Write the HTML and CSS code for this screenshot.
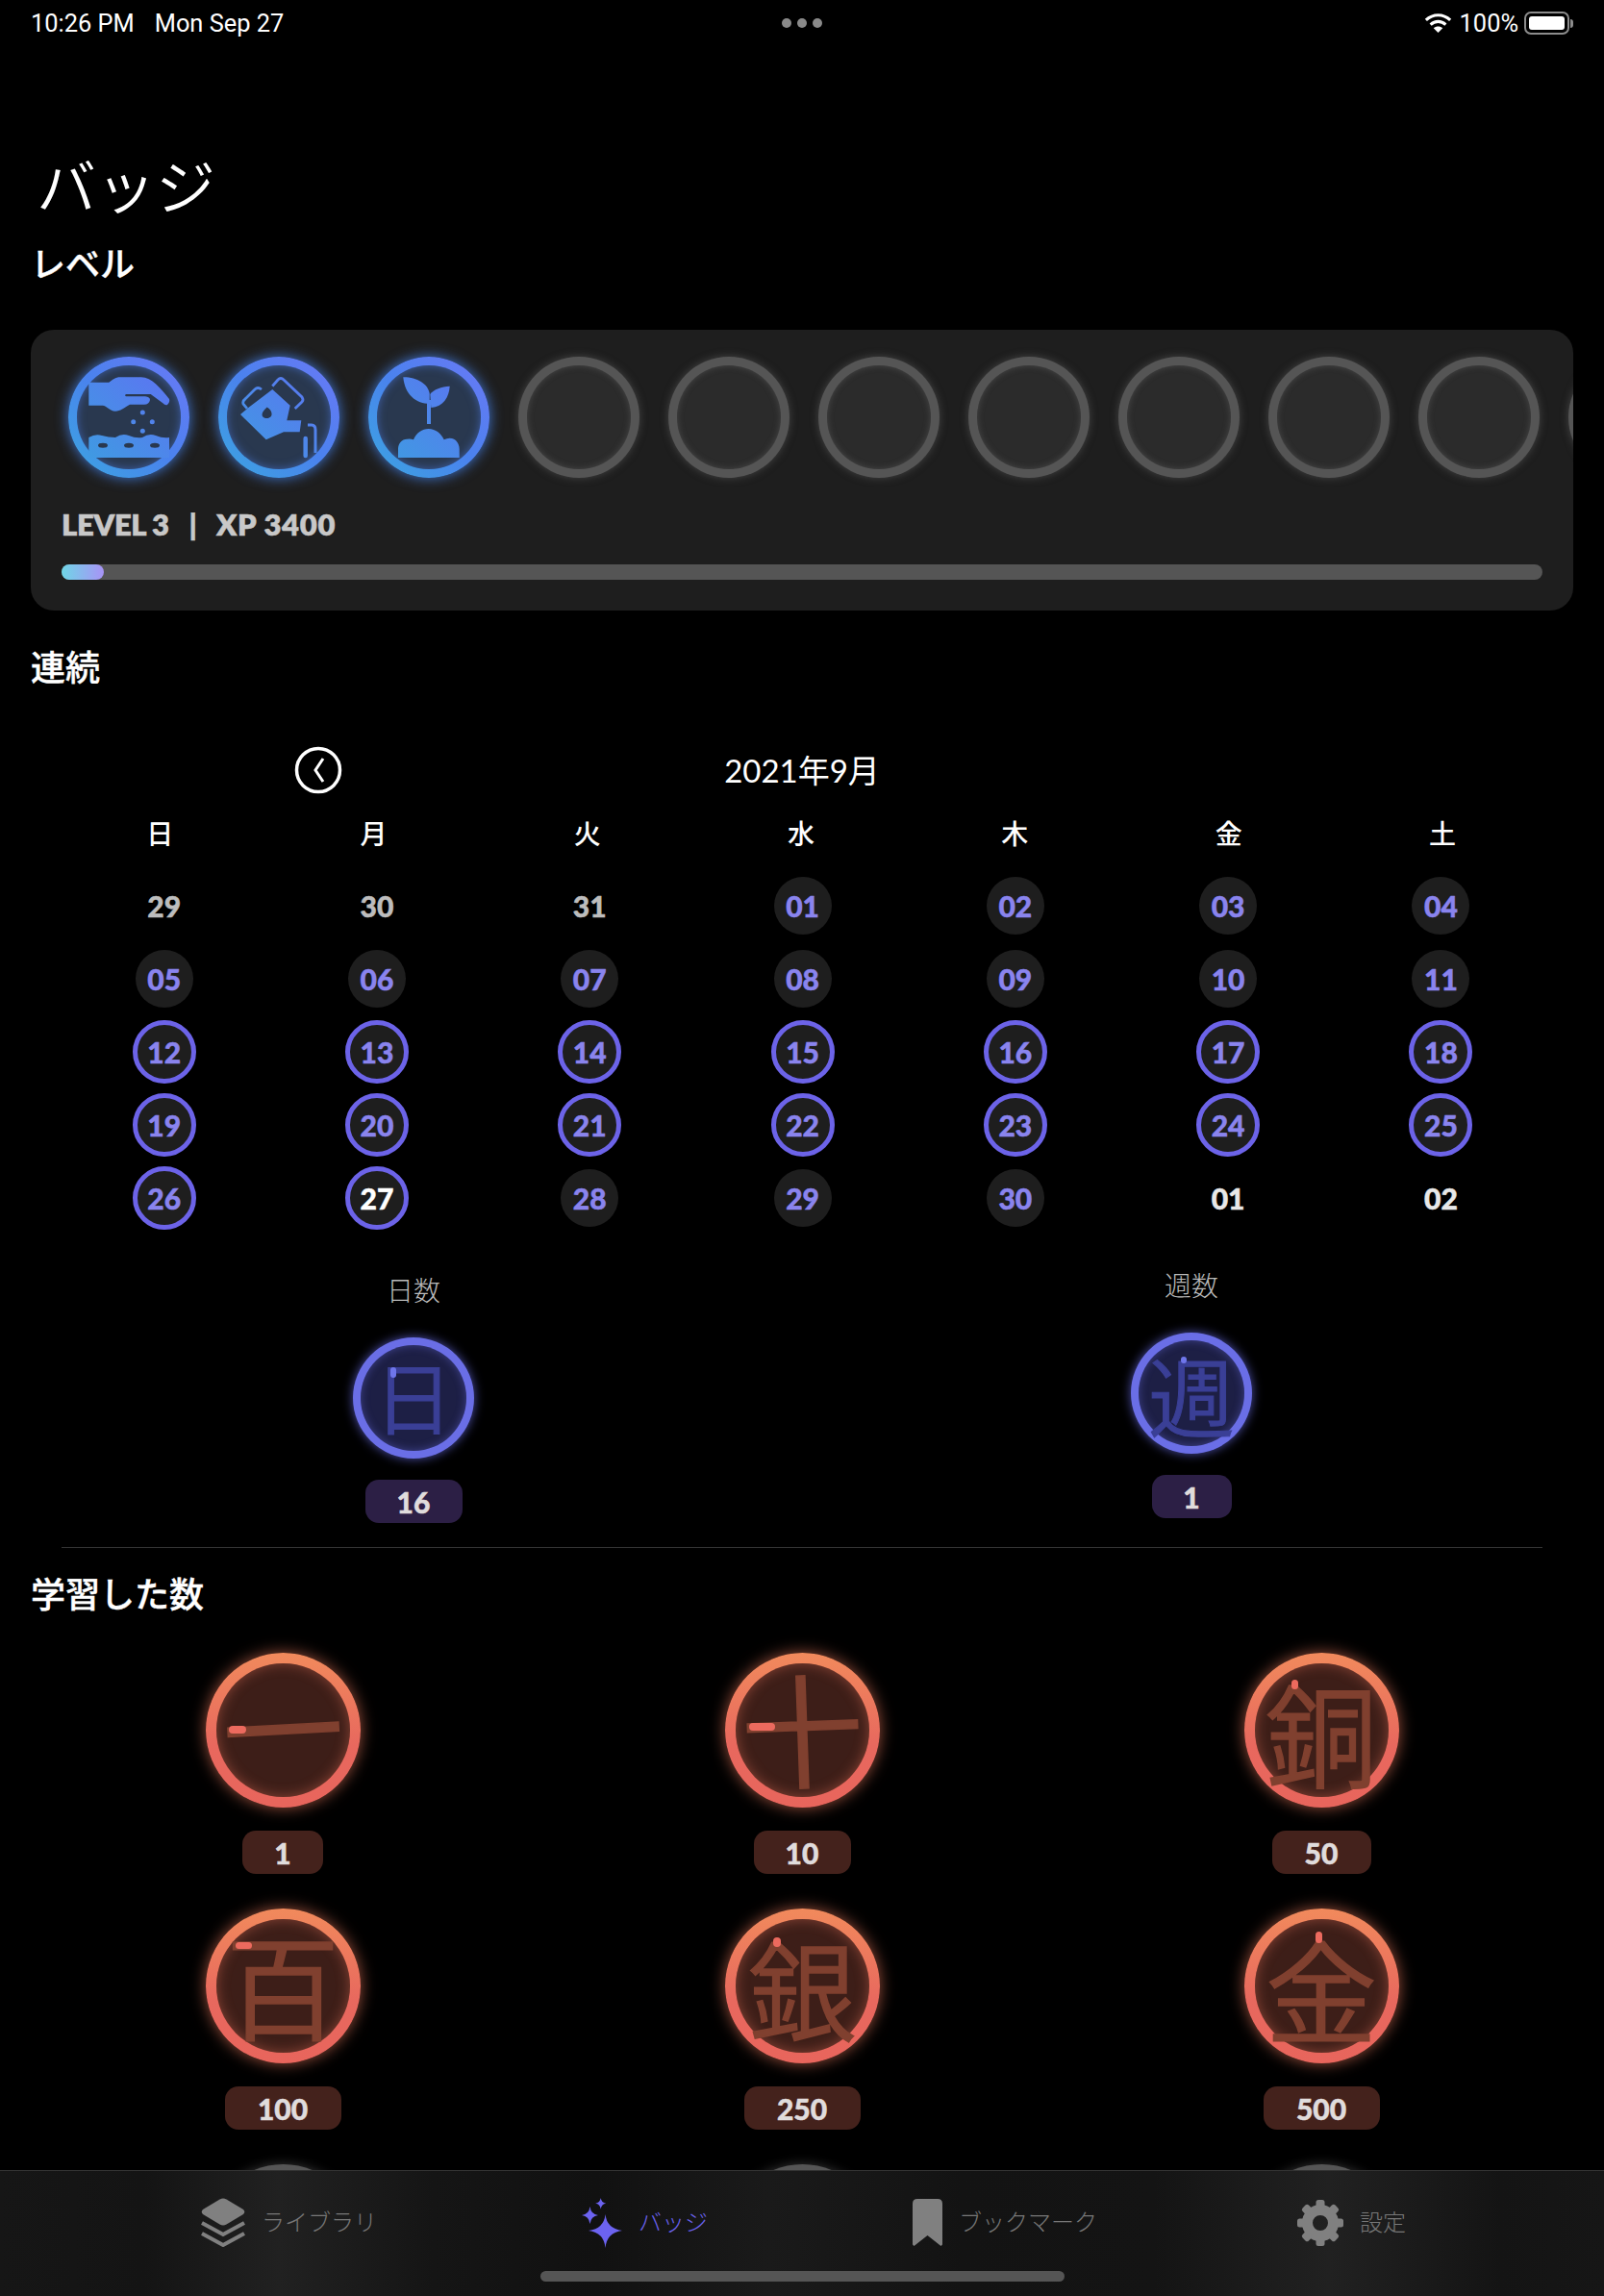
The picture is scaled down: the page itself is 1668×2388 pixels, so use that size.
FILE: index.html
```html
<!DOCTYPE html>
<html lang="ja">
<head>
    <meta charset="UTF-8">
    <meta name="viewport" content="width=device-width, initial-scale=1.0">
    <title>バッジ</title>
    <link rel="stylesheet" href="styles.css">
</head>
<body>
<div class="page">
    <div class="status-bar">
        <div class="status-left"><span>10:26 PM</span><span>Mon Sep 27</span></div>
        <div class="status-dots"><i></i><i></i><i></i></div>
        <div class="status-right">
            <svg class="wifi" viewBox="0 0 27 19" width="29" height="20">
                <path d="M1.500 6.500C8.500 0 18.500 0 25.500 6.500" fill="none" stroke="#fff" stroke-width="3"/>
                <path d="M6 11C10.500 7 16.500 7 21 11" fill="none" stroke="#fff" stroke-width="3"/>
                <path d="M13.500 19L9 14.500C11.500 12.300 15.500 12.300 18 14.500Z" fill="#fff"/>
            </svg>
            <span>100%</span>
            <div class="battery"><div class="battery-level"></div></div>
            <div class="battery-nub"></div>
        </div>
    </div>

    <h1 class="page-title">バッジ</h1>
    <h2 class="section-title section-level">レベル</h2>

    <div class="level-card">
        <div class="level-row">
            <div class="level-badge">
                <div class="level-inner">
                    <svg viewBox="9 9 108 108" width="108" height="108" class="level-icon">
                        <defs>
                            <linearGradient id="iconGrad" gradientUnits="userSpaceOnUse" x1="20" y1="105" x2="105" y2="20">
                                <stop offset="0" stop-color="#3f9ae2"/>
                                <stop offset="1" stop-color="#5c74f2"/>
                            </linearGradient>
                        </defs>
                        <g fill="url(#iconGrad)">
                            <path d="M21.300 26.700H42.300C46 24 49 21.300 54 21.300H75.700C87 21.300 96 33 105 44Q106 47 103 50Q101 51 98 48L85.700 39H61C58.500 39 58.500 41.300 61 41.300H80Q85 42 85 45Q84 49.700 79 49.700H64C58 53 54 56.700 49 56.700C43 56.700 40 50.700 35.700 50.700H21.300Z"/>
                            <circle cx="77.300" cy="58" r="2.500"/>
                            <circle cx="67.700" cy="67.700" r="2.500"/>
                            <circle cx="87.300" cy="67.700" r="2.500"/>
                            <circle cx="77.300" cy="77.300" r="2.500"/>
                            <path fill-rule="evenodd" d="M21.300 84Q28 80 35 82T49 84Q56 79 63 82T77 84Q84 79 91 82T105 84V105H21.300ZM31 92.300a5 2.500 0 0 0 10 0a5 2.500 0 0 0 -10 0ZM58 92.300a5 2.500 0 0 0 10 0a5 2.500 0 0 0 -10 0ZM85 92.300a5 2.500 0 0 0 10 0a5 2.500 0 0 0 -10 0Z"/>
                        </g>
                    </svg>
                </div>
            </div>
            <div class="level-badge">
                <div class="level-inner">
                    <svg viewBox="9 9 108 108" width="108" height="108" class="level-icon">
                        <path fill="url(#iconGrad)" fill-rule="evenodd" d="M31.300 53L56.300 34L74.700 50.700L71.300 66.300H86.300L84.700 78.300H68L49.700 86.300L23 60ZM50.700 52.500C47 56 44.500 59 46 62C48 65 53 64.500 55 62C56.500 59 55 55 50.700 52.500Z"/>
                        <path d="M30 54L26 49Q25 46 28 44L38 34Q41 31 45 34" fill="none" stroke="url(#iconGrad)" stroke-width="2.800"/>
                        <path d="M56.300 30.700L62 24Q65 21 68 24L87 42Q89 45 87 47L79.700 54" fill="none" stroke="url(#iconGrad)" stroke-width="2.800"/>
                        <path d="M93 71H97Q101 71 101 76V100" fill="none" stroke="url(#iconGrad)" stroke-width="3"/>
                        <path d="M90.700 85V103" fill="none" stroke="url(#iconGrad)" stroke-width="4.500" stroke-linecap="round"/>
                    </svg>
                </div>
            </div>
            <div class="level-badge">
                <div class="level-inner">
                    <svg viewBox="9 9 108 108" width="108" height="108" class="level-icon">
                        <g fill="url(#iconGrad)">
                            <path d="M36.300 21.300C50 21 62 28 63.700 38.300L63.700 49C50 49 38 40 36.300 21.300Z"/>
                            <path d="M84.700 30.700C84 42 78 52 65.300 53L64.300 39C68 34 76 31 84.700 30.700Z"/>
                            <rect x="61" y="45" width="4" height="25"/>
                            <path d="M31 105V96C31 90 35 85.700 40 85.700Q44 85 47 86.300C50 79 56 75 62.700 75C70 75 76 80 78.700 86.300Q83 84 87 85C91 86 94.700 90 94.700 96V105Z"/>
                        </g>
                    </svg>
                </div>
            </div>
            <div class="level-badge locked"><div class="level-inner"></div></div>
            <div class="level-badge locked"><div class="level-inner"></div></div>
            <div class="level-badge locked"><div class="level-inner"></div></div>
            <div class="level-badge locked"><div class="level-inner"></div></div>
            <div class="level-badge locked"><div class="level-inner"></div></div>
            <div class="level-badge locked"><div class="level-inner"></div></div>
            <div class="level-badge locked"><div class="level-inner"></div></div>
            <div class="level-badge locked"><div class="level-inner"></div></div>
        </div>
        <div class="level-text"><span class="level-name">LEVEL 3</span><span class="level-sep">|</span><span class="level-xp">XP 3400</span></div>
        <div class="progress"><div class="progress-fill" style="width: 44px"></div></div>
    </div>

    <h2 class="section-title section-streak">連続</h2>

    <div class="month-header">
        <div class="month-prev">
            <svg viewBox="0 0 50 50" width="50" height="50">
                <circle cx="25" cy="25" r="22.500" fill="none" stroke="#fff" stroke-width="3.500"/>
                <path d="M30 13L22 25L30 37" fill="none" stroke="#fff" stroke-width="3"/>
            </svg>
        </div>
        <div class="month-name">2021年9月</div>
        <div></div>
    </div>

    <div class="weekdays">
        <span>日</span><span>月</span><span>火</span><span>水</span><span>木</span><span>金</span><span>土</span>
    </div>

    <div class="days">
        <div class="day day-off">29</div>
        <div class="day day-off">30</div>
        <div class="day day-off">31</div>
        <div class="day day-fill"><span>01</span></div>
        <div class="day day-fill"><span>02</span></div>
        <div class="day day-fill"><span>03</span></div>
        <div class="day day-fill"><span>04</span></div>

        <div class="day day-fill"><span>05</span></div>
        <div class="day day-fill"><span>06</span></div>
        <div class="day day-fill"><span>07</span></div>
        <div class="day day-fill"><span>08</span></div>
        <div class="day day-fill"><span>09</span></div>
        <div class="day day-fill"><span>10</span></div>
        <div class="day day-fill"><span>11</span></div>

        <div class="day day-ring"><span>12</span></div>
        <div class="day day-ring"><span>13</span></div>
        <div class="day day-ring"><span>14</span></div>
        <div class="day day-ring"><span>15</span></div>
        <div class="day day-ring"><span>16</span></div>
        <div class="day day-ring"><span>17</span></div>
        <div class="day day-ring"><span>18</span></div>

        <div class="day day-ring"><span>19</span></div>
        <div class="day day-ring"><span>20</span></div>
        <div class="day day-ring"><span>21</span></div>
        <div class="day day-ring"><span>22</span></div>
        <div class="day day-ring"><span>23</span></div>
        <div class="day day-ring"><span>24</span></div>
        <div class="day day-ring"><span>25</span></div>

        <div class="day day-ring"><span>26</span></div>
        <div class="day day-ring day-today"><span>27</span></div>
        <div class="day day-fill"><span>28</span></div>
        <div class="day day-fill"><span>29</span></div>
        <div class="day day-fill"><span>30</span></div>
        <div class="day day-next">01</div>
        <div class="day day-next">02</div>
    </div>

    <div class="streak-stats">
        <div class="stat">
            <div class="stat-label">日数</div>
            <div class="badge badge-blue">
                <div class="badge-inner">
                    <span class="kanji kanji-nichi">日</span>
                    <i class="stroke-mark mark-nichi"></i>
                </div>
            </div>
            <div class="pill pill-blue pill-w101">16</div>
        </div>
        <div class="stat stat-raised">
            <div class="stat-label">週数</div>
            <div class="badge badge-blue">
                <div class="badge-inner">
                    <span class="kanji kanji-shuu">週</span>
                    <i class="stroke-mark mark-shuu"></i>
                </div>
            </div>
            <div class="pill pill-blue pill-w83">1</div>
        </div>
    </div>

    <div class="divider"></div>

    <h2 class="section-title section-learned">学習した数</h2>

    <div class="learned-grid">
        <div class="learned-item">
            <div class="badge badge-large">
                <div class="badge-inner">
                    <span class="kanji kanji-ichi">一</span>
                    <i class="stroke-mark mark-ichi"></i>
                </div>
            </div>
            <div class="pill pill-w84">1</div>
        </div>
        <div class="learned-item">
            <div class="badge badge-large">
                <div class="badge-inner">
                    <span class="kanji kanji-juu">十</span>
                    <i class="stroke-mark mark-juu"></i>
                </div>
            </div>
            <div class="pill pill-w101">10</div>
        </div>
        <div class="learned-item">
            <div class="badge badge-large">
                <div class="badge-inner">
                    <span class="kanji kanji-dou">銅</span>
                    <i class="stroke-mark mark-dou"></i>
                </div>
            </div>
            <div class="pill pill-w103">50</div>
        </div>
        <div class="learned-item">
            <div class="badge badge-large">
                <div class="badge-inner">
                    <span class="kanji kanji-hyaku">百</span>
                    <i class="stroke-mark mark-hyaku"></i>
                </div>
            </div>
            <div class="pill pill-w121">100</div>
        </div>
        <div class="learned-item">
            <div class="badge badge-large">
                <div class="badge-inner">
                    <span class="kanji kanji-gin">銀</span>
                    <i class="stroke-mark mark-gin"></i>
                </div>
            </div>
            <div class="pill pill-w121">250</div>
        </div>
        <div class="learned-item">
            <div class="badge badge-large">
                <div class="badge-inner">
                    <span class="kanji kanji-kin">金</span>
                    <i class="stroke-mark mark-kin"></i>
                </div>
            </div>
            <div class="pill pill-w121">500</div>
        </div>
        <div class="learned-item"><div class="badge badge-large badge-locked"><div class="badge-inner"></div></div></div>
        <div class="learned-item"><div class="badge badge-large badge-locked"><div class="badge-inner"></div></div></div>
        <div class="learned-item"><div class="badge badge-large badge-locked"><div class="badge-inner"></div></div></div>
    </div>

    <div class="tab-bar">
        <div class="tabs">
            <div class="tab">
                <svg viewBox="0 0 46 51" width="46" height="51">
                    <path d="M19.500 1.500Q23 -0.500 26.500 1.500L44 12Q46.500 14.500 44 17L26.500 27.500Q23 29.500 19.500 27.500L2 17Q-0.500 14.500 2 12Z" fill="#808080"/>
                    <path d="M1 26L23 38L45 26M1 37L23 49L45 37" fill="none" stroke="#808080" stroke-width="4"/>
                </svg>
                <span>ライブラリ</span>
            </div>
            <div class="tab tab-active">
                <svg viewBox="0 0 42 52" width="42" height="52">
                    <path d="M24.500 17Q26 32 42.500 34Q26 36 24.500 52Q23 36 7 34Q23 32 24.500 17Z" fill="#6c63f0"/>
                    <path d="M8.500 9Q9.500 17 17 18Q9.500 19 8.500 27Q7.500 19 0 18Q7.500 17 8.500 9Z" fill="#6c63f0"/>
                    <path d="M19.700 0Q20.500 5 25.200 5.700Q20.500 6.400 19.700 11.400Q18.900 6.400 14.200 5.700Q18.900 5 19.700 0Z" fill="#6c63f0"/>
                </svg>
                <span>バッジ</span>
            </div>
            <div class="tab">
                <svg viewBox="0 0 31 49" width="31" height="49">
                    <path d="M0 5Q0 0 5 0H26Q31 0 31 5V47.500L29.500 49L15.500 38L1.500 49L0 47.500Z" fill="#808080"/>
                </svg>
                <span>ブックマーク</span>
            </div>
            <div class="tab tab-settings">
                <svg viewBox="0 0 48 48" width="48" height="48">
                    <g fill="#808080">
                        <rect x="19.500" y="0" width="9" height="12" rx="2.500"/>
                        <rect x="19.500" y="0" width="9" height="12" rx="2.500" transform="rotate(45 24 24)"/>
                        <rect x="19.500" y="0" width="9" height="12" rx="2.500" transform="rotate(90 24 24)"/>
                        <rect x="19.500" y="0" width="9" height="12" rx="2.500" transform="rotate(135 24 24)"/>
                        <rect x="19.500" y="0" width="9" height="12" rx="2.500" transform="rotate(180 24 24)"/>
                        <rect x="19.500" y="0" width="9" height="12" rx="2.500" transform="rotate(225 24 24)"/>
                        <rect x="19.500" y="0" width="9" height="12" rx="2.500" transform="rotate(270 24 24)"/>
                        <rect x="19.500" y="0" width="9" height="12" rx="2.500" transform="rotate(315 24 24)"/>
                    </g>
                    <circle cx="24" cy="24" r="13.500" fill="none" stroke="#808080" stroke-width="11"/>
                </svg>
                <span>設定</span>
            </div>
        </div>
        <div class="home-indicator"></div>
    </div>
</div>
</body>
</html>
```

FILE: styles.css
```css
* {
    box-sizing: border-box;
}
html, body {
    margin: 0;
    padding: 0;
    background: #000;
}
.page {
    position: relative;
    width: 1668px;
    height: 2388px;
    overflow: hidden;
    background: #000;
    color: #fff;
    font-family: "Lato", "Noto Sans CJK JP", sans-serif;
}

/* status bar */
.status-bar {
    display: grid;
    grid-template-columns: 1fr auto 1fr;
    align-items: center;
    height: 48px;
    padding: 0 32px 0 32px;
    font-family: "Roboto", sans-serif;
    font-size: 25.4px;
    color: #fff;
}
.status-left {
    display: flex;
    gap: 21px;
}
.status-dots {
    display: flex;
    gap: 6px;
}
.status-dots i {
    width: 10px;
    height: 10px;
    border-radius: 50%;
    background: #8a8a8a;
}
.status-right {
    display: flex;
    align-items: center;
    justify-content: flex-end;
}
.wifi {
    margin-right: 8px;
}
.battery {
    width: 47px;
    height: 24px;
    margin-left: 6px;
    padding: 3px;
    border: 2px solid #8c8c8c;
    border-radius: 7px;
}
.battery-level {
    height: 100%;
    border-radius: 3px;
    background: #fff;
}
.battery-nub {
    width: 3px;
    height: 9px;
    margin-left: 1px;
    border-radius: 0 3px 3px 0;
    background: #8c8c8c;
}

/* headings */
.page-title {
    margin: 110px 0 0 38px;
    font-size: 62px;
    line-height: 72px;
    font-weight: 350;
}
.section-title {
    margin: 0 0 0 32px;
    font-size: 36px;
    line-height: 44px;
    font-weight: 500;
    -webkit-text-stroke: 0.4px #fff;
}
.section-level {
    margin-top: 22px;
}
.section-streak {
    margin-top: 37px;
}
.section-learned {
    margin-top: 26px;
}

/* level card */
.level-card {
    margin: 47px 32px 0;
    height: 292px;
    padding-top: 28px;
    border-radius: 24px;
    background: #1e1e1e;
    overflow: hidden;
}
.level-row {
    display: flex;
    gap: 30px;
    padding: 0 0 0 39px;
}
.level-badge {
    flex: none;
    width: 126px;
    height: 126px;
    padding: 9px;
    border-radius: 50%;
    background: linear-gradient(225deg, #6c78f6, #4a82ee 50%, #3ba6e0);
    box-shadow: 0 0 14px rgba(70, 135, 245, 0.85);
}
.level-inner {
    width: 100%;
    height: 100%;
    border-radius: 50%;
    background: #29384f;
    box-shadow: inset 0 0 10px rgba(80, 130, 240, 0.55);
}
.level-icon {
    display: block;
}
.level-badge.locked {
    background: #555;
    box-shadow: 0 0 9px rgba(110, 110, 110, 0.5);
}
.locked .level-inner {
    background: #2b2b2b;
    box-shadow: inset 0 0 7px rgba(110, 110, 110, 0.45);
}
.level-text {
    margin: 28px 0 0 32px;
    font-size: 31px;
    line-height: 40px;
    font-weight: 800;
    color: #c8c8c8;
    -webkit-text-stroke: 0.5px #c8c8c8;
}
.level-name {
    letter-spacing: -0.4px;
}
.level-xp {
    letter-spacing: 0.7px;
}
.level-sep {
    margin: 0 20px 0 21px;
}
.progress {
    height: 16px;
    margin: 22px 32px 0;
    border-radius: 8px;
    background: #555;
}
.progress-fill {
    height: 100%;
    border-radius: 8px;
    background: linear-gradient(90deg, #6fd6e6, #a893f6);
}

/* calendar */
.month-header {
    display: grid;
    grid-template-columns: 1fr auto 1fr;
    align-items: center;
    height: 50px;
    margin-top: 60px;
}
.month-prev {
    padding-left: 306px;
    line-height: 0;
}
.month-name {
    margin-top: -2px;
    font-size: 33px;
    font-weight: 400;
}
.weekdays {
    display: grid;
    grid-template-columns: repeat(7, 222.3px);
    justify-items: center;
    margin: 23px 0 0 55px;
    font-size: 28px;
    line-height: 36px;
    font-weight: 500;
}
.days {
    display: grid;
    grid-template-columns: repeat(7, 221.3px);
    grid-auto-rows: 76px;
    align-items: center;
    justify-items: center;
    margin: 19px 0 0 60px;
    font-size: 30px;
    font-weight: 900;
    -webkit-text-stroke: 0.5px currentColor;
}
.day span {
    display: flex;
    align-items: center;
    justify-content: center;
    border-radius: 50%;
    color: #8a84ee;
    background: #1e1e1e;
}
.day-fill span {
    width: 60px;
    height: 60px;
}
.day-ring span {
    width: 66px;
    height: 66px;
    border: 5px solid #6c63e8;
}
.day-off {
    color: #bdbdbd;
}
.day-next {
    color: #e8e8e8;
}
.day-today span {
    color: #fff;
}

/* streak badges */
.streak-stats {
    display: flex;
    align-items: flex-start;
    gap: 609px;
    margin-top: 38px;
    padding-left: 330px;
}
.stat {
    display: flex;
    flex-direction: column;
    align-items: center;
    width: 200px;
}
.stat-raised {
    margin-top: -5px;
}
.stat-label {
    font-size: 28px;
    line-height: 40px;
    font-weight: 300;
    color: #bbb;
}
.badge {
    position: relative;
    flex: none;
    border-radius: 50%;
}
.badge-inner {
    position: relative;
    display: flex;
    align-items: center;
    justify-content: center;
    width: 100%;
    height: 100%;
    border-radius: 50%;
}
.badge-blue {
    width: 126px;
    height: 126px;
    margin-top: 29px;
    padding: 8px;
    background: #6a6ee6;
    box-shadow: 0 0 11px rgba(106, 110, 230, 0.75);
}
.badge-blue .badge-inner {
    background: #1d1f45;
    box-shadow: inset 0 0 10px rgba(106, 110, 230, 0.45);
}
.badge-blue .kanji {
    color: #3a3f96;
    -webkit-text-stroke: 1px #3a3f96;
}
.badge-blue .stroke-mark {
    background: #6f76ea;
}
.badge-large {
    width: 161px;
    height: 161px;
    padding: 11px;
    background: linear-gradient(180deg, #f18a5c, #e8685e 60%, #e8655c);
    box-shadow: 0 0 16px rgba(240, 125, 95, 0.65);
}
.badge-large .badge-inner {
    background: #3d1e18;
    box-shadow: inset 0 0 14px rgba(235, 115, 90, 0.45);
}
.badge-locked {
    background: #555;
    box-shadow: 0 0 12px rgba(110, 110, 110, 0.5);
}
.badge-locked .badge-inner {
    background: #2b2b2b;
    box-shadow: none;
}
.kanji {
    color: #80402f;
    font-family: "Noto Sans CJK JP", sans-serif;
    font-weight: 350;
    line-height: 1;
    -webkit-text-stroke: 1.5px #80402f;
}
.kanji-nichi { font-size: 82px; transform: translateY(-3px); }
.kanji-shuu { font-size: 90px; }
.kanji-ichi { font-size: 126px; transform: translateY(-7px) rotate(-3deg); }
.kanji-juu { font-size: 128px; transform: translateY(-5px) rotate(-2deg); }
.kanji-dou { font-size: 116px; }
.kanji-hyaku { font-size: 118px; transform: translateY(-4px); }
.kanji-gin { font-size: 112px; }
.kanji-kin { font-size: 116px; }

/* first stroke highlight, placed over the kanji */
.stroke-mark {
    position: absolute;
    border-radius: 4px;
    background: #ec6a5e;
}
.mark-nichi { left: 31px; top: 23px; width: 6px; height: 11px; }
.mark-shuu { left: 44px; top: 17px; width: 6px; height: 7px; }
.mark-ichi { left: 13px; top: 65px; width: 18px; height: 8px; }
.mark-juu { left: 14px; top: 62px; width: 27px; height: 8px; }
.mark-dou { left: 38px; top: 17px; width: 7px; height: 10px; }
.mark-hyaku { left: 20px; top: 24px; width: 17px; height: 7px; }
.mark-gin { left: 39px; top: 19px; width: 8px; height: 10px; }
.mark-kin { left: 63px; top: 13px; width: 7px; height: 12px; }

.pill {
    display: flex;
    align-items: center;
    justify-content: center;
    height: 45px;
    margin-top: 24px;
    border-radius: 14px;
    background: #44221c;
    color: #e0dcdc;
    font-size: 30px;
    font-weight: 900;
    -webkit-text-stroke: 0.5px #e0dcdc;
}
.pill-blue {
    margin-top: 22px;
    background: #2c1f45;
}
.pill-w83 { width: 83px; }
.pill-w84 { width: 84px; }
.pill-w101 { width: 101px; }
.pill-w103 { width: 103px; }
.pill-w121 { width: 121px; }

.divider {
    height: 1px;
    margin: 25px 64px 0;
    background: #333;
}

/* learned */
.learned-grid {
    display: grid;
    grid-template-columns: repeat(3, 540px);
    grid-auto-rows: 266px;
    margin: 39px 0 0 24px;
}
.learned-item {
    display: flex;
    flex-direction: column;
    align-items: center;
}

/* tab bar sits over the scrolled content */
.tab-bar {
    position: absolute;
    left: 0;
    right: 0;
    bottom: 0;
    height: 131px;
    padding-top: 28px;
    border-top: 1px solid #333;
    background: linear-gradient(90deg, #161616 0, #141414 150px, #212121 290px, #151515 450px, #111 620px, #1a1a1a 800px, #131313 1000px, #141414 1200px, #212121 1382px, #141414 1560px, #161616 1668px);
}
.tabs {
    display: flex;
    align-items: center;
    gap: 213px;
    height: 51px;
    padding-left: 209px;
}
.tab {
    display: flex;
    align-items: center;
    gap: 17px;
    font-size: 24px;
    font-weight: 300;
    color: #777;
}
.tab span {
    padding-bottom: 4px;
}
.tab-active {
    color: #6c63f0;
}
.tab-settings {
    margin-left: -5px;
}
.home-indicator {
    width: 545px;
    height: 11px;
    margin: 25px auto 0;
    border-radius: 6px;
    background: #555;
}
```
